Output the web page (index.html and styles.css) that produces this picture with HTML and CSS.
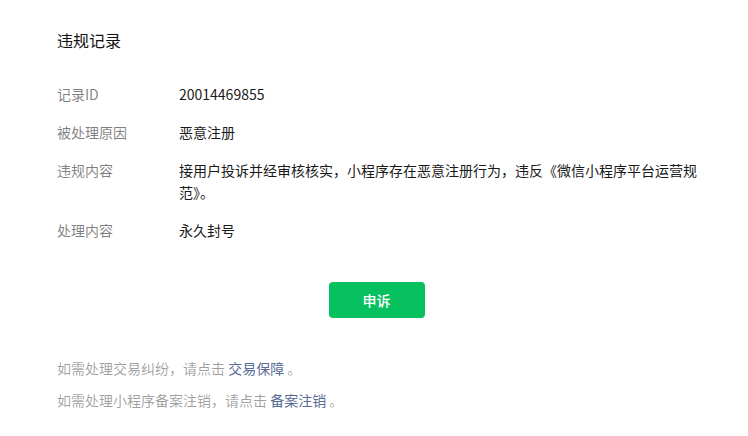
FILE: index.html
```html
<!DOCTYPE html>
<html lang="zh">
<head>
<meta charset="utf-8">
<link rel="stylesheet" href="styles.css">
</head>
<body>
<div class="page">
  <h1 class="title">违规记录</h1>
  <dl class="info">
    <div class="row"><dt>记录ID</dt><dd>20014469855</dd></div>
    <div class="row"><dt>被处理原因</dt><dd>恶意注册</dd></div>
    <div class="row"><dt>违规内容</dt><dd>接用户投诉并经审核核实，小程序存在恶意注册行为，违反《微信小程序平台运营规范》。</dd></div>
    <div class="row"><dt>处理内容</dt><dd>永久封号</dd></div>
  </dl>
  <div class="actions"><button class="btn">申诉</button></div>
  <div class="tips">
    <p>如需处理交易纠纷，请点击 <a href="#">交易保障</a> 。</p>
    <p>如需处理小程序备案注销，请点击 <a href="#">备案注销</a> 。</p>
  </div>
</div>
</body>
</html>
```
FILE: styles.css
```css
html, body { margin: 0; padding: 0; background: #fff; }
body {
  font-family: "Noto Sans CJK SC", "Noto Sans", sans-serif;
  font-size: 14px;
  color: rgba(0,0,0,0.9);
}
.page { padding: 28px 48px 0 57px; }
.title {
  margin: 0;
  font-size: 16px;
  line-height: 24px;
  font-weight: 400;
  color: #111;
}
.info { margin: 31px 0 0; display: flex; flex-direction: column; gap: 16px; }
.row { display: flex; line-height: 22px; }
.row dt { width: 122px; flex: none; color: rgba(0,0,0,0.5); }
.row dd { margin: 0; width: 522px; flex: none; color: #1a1a1a; }
.actions { margin-top: 41px; padding-right: 4px; display: flex; justify-content: center; }
.btn {
  width: 96px; height: 36px;
  border: none; border-radius: 4px;
  background: #07c160; color: #fff;
  font-family: inherit; font-size: 14px; font-weight: 500;
}
.tips { margin-top: 39px; display: flex; flex-direction: column; gap: 10px; }
.tips p { margin: 0; line-height: 22px; color: rgba(0,0,0,0.38); }
.tips a { color: #576b95; text-decoration: none; }
```
